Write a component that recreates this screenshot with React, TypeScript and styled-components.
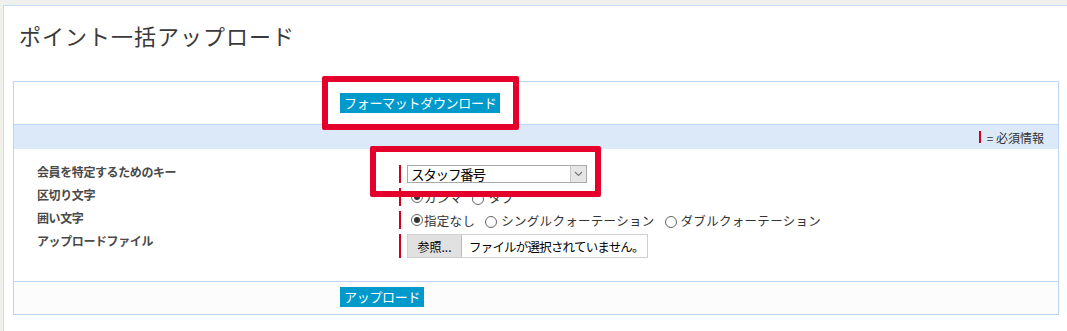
import React from "react";
import styled, { createGlobalStyle } from "styled-components";

const GlobalStyle = createGlobalStyle`
  html, body {
    margin: 0;
    padding: 0;
    background: #f0f0ec;
    overflow: hidden;
  }
  body {
    font-family: "Noto Sans CJK JP", "Noto Sans", sans-serif;
    color: #333;
  }
`;

const Stage = styled.div`
  position: relative;
  width: 1067px;
  height: 331px;
  overflow: hidden;
  padding-top: 5px;
  box-sizing: border-box;
`;

const Panel = styled.div`
  margin-left: 3px;
  width: 1080px;
  height: 400px;
  background: #fff;
  border: 1px solid #c6dcf2;
  box-sizing: border-box;
`;

const Title = styled.h1`
  margin: 0;
  padding: 13px 0 0 15px;
  height: 75px;
  box-sizing: border-box;
  font-size: 22px;
  line-height: 33px;
  font-weight: 400;
  letter-spacing: 1px;
  color: #3a3a3a;
`;

const Table = styled.div`
  margin-left: 9px;
  width: 1046px;
  border: 1px solid #bcd5f4;
  box-sizing: border-box;
`;

const ButtonRow = styled.div<{ $h: number; $bg?: string }>`
  display: flex;
  align-items: flex-start;
  height: ${(p) => p.$h}px;
  padding: ${(p) => (p.$h > 40 ? 11 : 5)}px 0 0 326px;
  box-sizing: border-box;
  background: ${(p) => p.$bg || "#fff"};
`;

const Divider = styled.div`
  height: 1px;
  background: #bcd5f4;
`;

const ActionButton = styled.button`
  font-family: "Noto Sans CJK JP", sans-serif;
  font-size: 13px;
  letter-spacing: -0.3px;
  line-height: 20px;
  height: 20px;
  padding: 0 4px;
  border: none;
  background: #0099cc;
  color: #fff;
  cursor: pointer;
`;

const NoticeBar = styled.div`
  display: flex;
  justify-content: flex-end;
  align-items: center;
  height: 24px;
  padding-right: 14px;
  background: #dbe9f8;
  font-size: 12px;
  color: #333;
`;

const ReqMark = styled.span`
  display: inline-block;
  width: 2px;
  height: 12px;
  background: #d0021b;
  margin-right: 6px;
`;

const Form = styled.div`
  display: grid;
  grid-template-columns: 362px 1fr;
  row-gap: 5px;
  padding: 16px 0 23px 23px;
`;

const Label = styled.div`
  align-self: start;
  font-size: 12px;
  line-height: 14px;
  font-weight: 700;
  letter-spacing: -0.4px;
  color: #4a4a4a;
`;

const Field = styled.div<{ $h: number }>`
  display: flex;
  align-items: center;
  height: ${(p) => p.$h}px;
  border-left: 2px solid #d0021b;
  padding-left: 6px;
`;

const SelectBox = styled.div`
  display: flex;
  align-items: center;
  width: 180px;
  height: 18px;
  box-sizing: border-box;
  border: 1px solid #a9a9a9;
  background: #fff;
  font-size: 13.5px;
  letter-spacing: -1.2px;
  color: #000;
  padding-left: 3px;
`;

const SelectArrow = styled.span`
  margin-left: auto;
  display: flex;
  align-items: center;
  justify-content: center;
  width: 16px;
  height: 16px;
  box-sizing: border-box;
  background: #e6e6e6;
  border-left: 1px solid #c8c8c8;
`;

const RadioItem = styled.label<{ $first?: boolean }>`
  display: flex;
  align-items: center;
  margin-left: ${(p) => (p.$first ? 4 : 10)}px;
  font-size: 12.5px;
  letter-spacing: 0.3px;
  color: #333;
`;

const RadioDot = styled.span<{ $on?: boolean }>`
  position: relative;
  display: inline-block;
  width: 12px;
  height: 12px;
  box-sizing: border-box;
  border-radius: 50%;
  border: 1px solid #666;
  background: #fff;
  margin-right: ${(p) => (p.$on ? 1 : 4)}px;
  margin-top: ${(p) => (p.$on ? 0 : 4)}px;
  &::after {
    content: "";
    display: ${(p) => (p.$on ? "block" : "none")};
    position: absolute;
    left: 2px;
    top: 2px;
    width: 6px;
    height: 6px;
    border-radius: 50%;
    background: #333;
  }
`;

const FileBox = styled.div`
  display: flex;
  align-items: center;
  width: 241px;
  height: 24px;
  box-sizing: border-box;
  border: 1px solid #cfcfcf;
  background: #fff;
`;

const FileButton = styled.span`
  display: flex;
  align-items: center;
  justify-content: center;
  width: 54px;
  height: 22px;
  box-sizing: border-box;
  background: #e1e1e1;
  border-right: 1px solid #bdbdbd;
  font-size: 12px;
  color: #000;
`;

const FileText = styled.span`
  margin-left: 7px;
  font-size: 12.5px;
  letter-spacing: -0.8px;
  color: #000;
`;

const RedBox = styled.div<{ $x: number; $y: number; $w: number; $h: number }>`
  position: absolute;
  left: ${(p) => p.$x}px;
  top: ${(p) => p.$y}px;
  width: ${(p) => p.$w}px;
  height: ${(p) => p.$h}px;
  box-sizing: border-box;
  border: 6px solid #e5002b;
  border-radius: 2px;
  pointer-events: none;
`;

const Radio = ({ on, first, children }: { on?: boolean; first?: boolean; children: React.ReactNode }) => (
  <RadioItem $first={first}>
    <RadioDot $on={on} />
    {children}
  </RadioItem>
);

export default function App() {
  return (
    <>
      <GlobalStyle />
      <Stage>
        <Panel>
          <Title>ポイント一括アップロード</Title>
          <Table>
            <ButtonRow $h={42}>
              <ActionButton>フォーマットダウンロード</ActionButton>
            </ButtonRow>
            <Divider />
            <NoticeBar>
              <ReqMark />= 必須情報
            </NoticeBar>
            <Form>
              <Label>会員を特定するためのキー</Label>
              <Field $h={18}>
                <SelectBox>
                  スタッフ番号
                  <SelectArrow>
                    <svg width="9" height="6" viewBox="0 0 9 6">
                      <path d="M1 1 L4.5 4.5 L8 1" fill="none" stroke="#777" strokeWidth="1.2" />
                    </svg>
                  </SelectArrow>
                </SelectBox>
              </Field>
              <Label>区切り文字</Label>
              <Field $h={18}>
                <Radio on first>カンマ</Radio>
                <Radio>タブ</Radio>
              </Field>
              <Label>囲い文字</Label>
              <Field $h={18}>
                <Radio on first>指定なし</Radio>
                <Radio>シングルクォーテーション</Radio>
                <Radio>ダブルクォーテーション</Radio>
              </Field>
              <Label>アップロードファイル</Label>
              <Field $h={24}>
                <FileBox>
                  <FileButton>参照...</FileButton>
                  <FileText>ファイルが選択されていません。</FileText>
                </FileBox>
              </Field>
            </Form>
            <Divider />
            <ButtonRow $h={32} $bg="#fcfcfc">
              <ActionButton>アップロード</ActionButton>
            </ButtonRow>
          </Table>
        </Panel>
        <RedBox $x={322} $y={76} $w={197} $h={54} />
        <RedBox $x={370} $y={146} $w={231} $h={51} />
      </Stage>
    </>
  );
}
